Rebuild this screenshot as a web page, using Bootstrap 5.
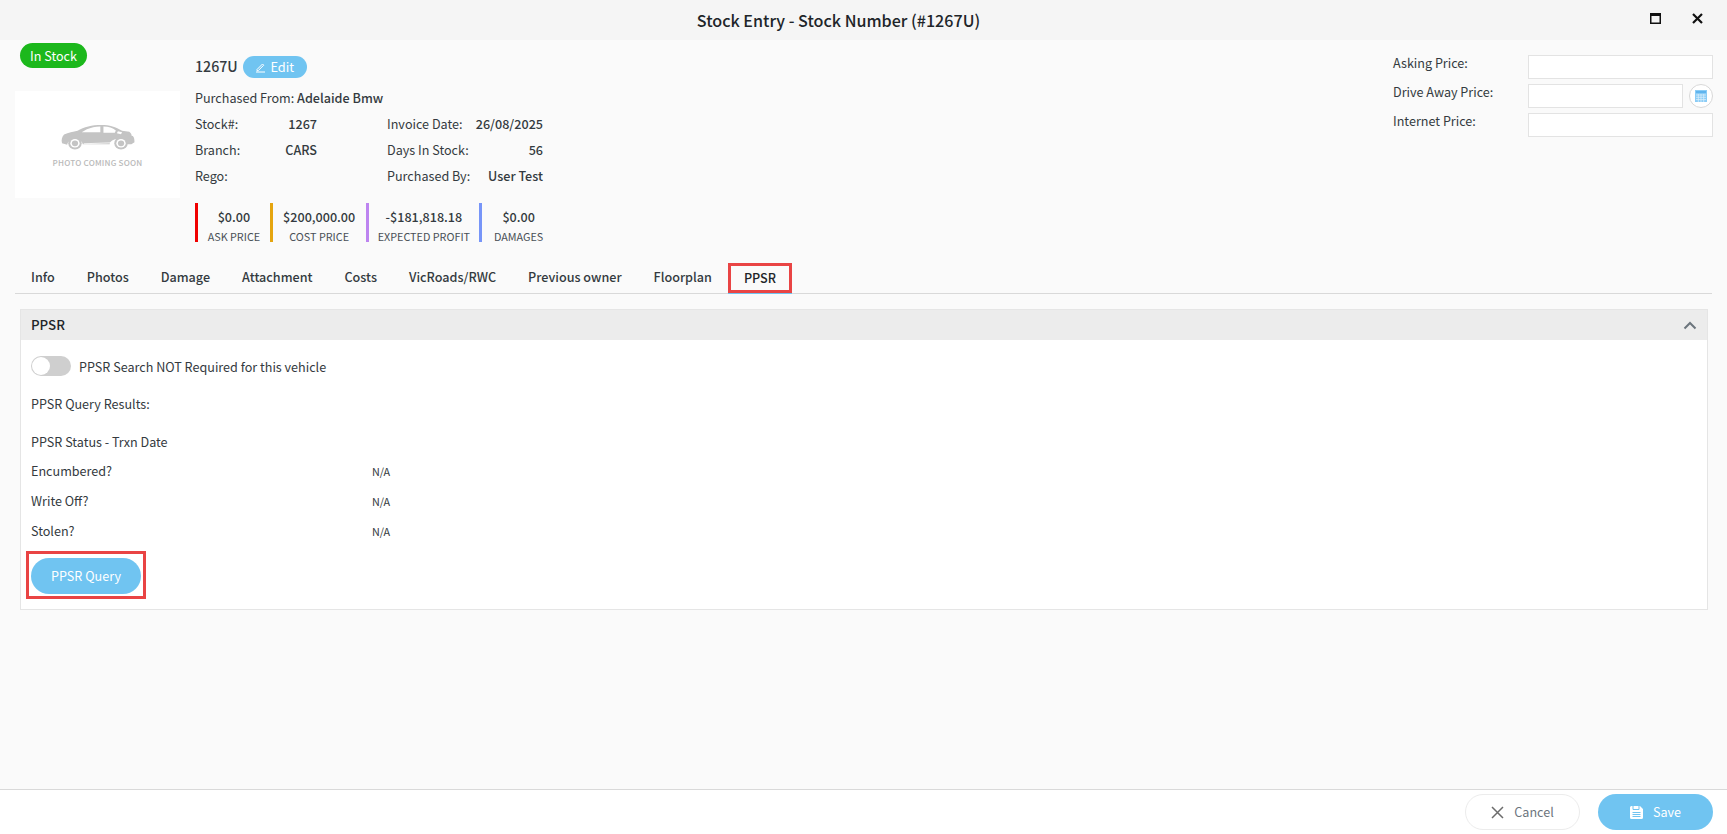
<!DOCTYPE html>
<html lang="en">
<head>
<meta charset="utf-8">
<title>Stock Entry</title>
<link href="https://cdn.jsdelivr.net/npm/bootstrap@5.3.0/dist/css/bootstrap.min.css" rel="stylesheet">
<style>
html,body{height:100%;}
body{font-family:"Noto Sans CJK SC","Noto Sans",sans-serif;font-size:12.6px;line-height:20px;color:#343a40;background:#fafafa;overflow:hidden;}
.shell{height:834px;}
.topbar{height:40px;background:#f5f5f5;position:relative;padding-right:50px;}
.topbar-title{font-size:16.1px;font-weight:500;color:#212529;}
.win-btns{position:absolute;right:24px;top:13px;gap:31px;}
.hero{height:224px;padding-top:3px;}
.left-col{width:195px;padding-left:15px;flex:none;}
.pill-stock{width:67px;height:25px;margin-left:5px;background:#1cb81c;color:#fff;border-radius:13px;font-size:12.6px;line-height:26px;text-align:center;}
.photo{width:165px;height:107px;background:#fff;margin-top:23px;padding-top:34px;}
.car-art{display:block;margin:0 auto;}
.photo-text{font-size:8.1px;line-height:12px;color:#b9b9b9;font-weight:500;letter-spacing:.2px;margin-top:7px;}
.mid-col{width:360px;flex:none;padding-top:13px;}
.stock-code{font-size:14.2px;font-weight:500;color:#343a40;margin-top:-2px;}
.edit-pill{width:64px;height:22px;background:#70c4f1;color:#fff;border:0;border-radius:11px;font-size:12.8px;line-height:22px;padding:0;margin-left:5px;}
.buy-row{margin-top:7px;height:26px;line-height:26px;}
.strong-val{font-weight:500;font-size:12.6px;}
.fact-grid{display:grid;grid-template-columns:122px 70px 156px;width:348px;}
.fact-grid>div{height:26px;line-height:26px;}
.stats{margin-top:14px;height:39px;}
.stat{border-left:3px solid #000;text-align:center;height:39px;}
.stat-num{font-size:12.6px;line-height:18px;font-weight:500;margin-top:5px;}
.stat-cap{font-size:10.8px;line-height:18px;color:#495057;margin-top:1px;}
.s1{border-color:#f00000;width:75px;}
.s2{border-color:#e5a50f;width:96px;}
.s3{border-color:#bd84f0;width:114px;}
.s4{border-color:#7795f8;width:76px;}
.price-col{width:334px;padding-right:14px;padding-top:12px;flex:none;}
.price-row{height:24px;margin-bottom:5px;}
.price-label{width:135px;line-height:20px;margin-top:-2px;}
.price-input{height:24px;min-width:0;background:#fff;border:1px solid #e3e3e3;border-radius:0;padding:0 6px;}
.calc-btn{width:24px;height:24px;margin-left:6px;border:1px solid #d8d8d8;border-radius:50%;background:#fff;flex:none;padding:0;}
.tabs-strip{margin:0 15px;height:30px;border-bottom:1px solid #d9d9d9;}
.tab-link{padding:0 16px;height:29px;line-height:26px;font-weight:500;color:#343a40;font-size:12.6px;text-decoration:none;}
.tab-on{height:30px;margin-top:-1px;border:3px solid #e94444;padding:0 13px;line-height:24px;box-shadow:0 1px 0 #70c4f1;color:#212529;}
.panel-box{margin:15px 19px 0 20px;height:301px;background:#fff;border:1px solid #e5e5e5;}
.panel-head{height:30px;background:#ececec;padding:0 10px;font-size:13.3px;font-weight:500;color:#212529;}
.panel-body-inner{padding:16px 10px 0 10px;color:#343a40;}
.switch-track{width:40px;height:20px;border-radius:10px;background:#cfcfcf;position:relative;flex:none;}
.switch-knob{position:absolute;left:1px;top:1px;width:18px;height:18px;border-radius:50%;background:#fff;}
.line-a{height:20px;line-height:20px;}
.line-lift{line-height:22px;}
.toggle-text{padding-top:2px;}
.gap-results{margin-top:18px;}
.gap-status{margin-top:17px;}
.na-val{position:absolute;left:341px;font-size:10.8px;}
.line-b{position:relative;height:20px;margin-bottom:10px;}
.line-first{margin-top:10px;}
.query-frame{width:120px;height:48px;margin-left:-5px;border:3px solid #e94444;padding:4px 2px;margin-top:10px;}
.query-btn{width:110px;height:36px;border:0;padding:0;border-radius:18px;background:#70c4f1;color:#fff;font-size:12.6px;}
.foot{height:45px;background:#fff;border-top:1px solid #d9d9d9;padding:4px 14px 0 0;gap:18px;}
.foot-btn{width:115px;height:36px;padding:0;border-radius:18px;font-size:12.6px;gap:10px;}
.foot-cancel{background:#fff;border:1px solid #ececec;color:#6c757d;}
.foot-save{background:#70c4f1;border:0;color:#fff;}
</style>
</head>
<body>
<div class="shell d-flex flex-column">
  <div class="topbar d-flex align-items-center justify-content-center">
    <span class="topbar-title">Stock Entry - Stock Number (#1267U)</span>
    <div class="win-btns d-flex align-items-center">
      <svg width="11" height="11" viewBox="0 0 11 11"><rect x=".75" y=".75" width="9.5" height="9.5" fill="none" stroke="#111" stroke-width="1.5"/><rect x="0" y="0" width="11" height="3" fill="#111"/></svg>
      <svg width="11" height="11" viewBox="0 0 11 11"><path d="M1 1l9 9M10 1l-9 9" stroke="#111" stroke-width="2.2"/></svg>
    </div>
  </div>

  <div class="hero d-flex">
    <div class="left-col">
      <div class="pill-stock">In Stock</div>
      <div class="photo text-center">
        <svg class="car-art" width="74" height="25" viewBox="0 1 71.500 26" preserveAspectRatio="none"><path fill="#c4c4c4" d="M1 20c-1-3 0-7 2-9 4-2 9-3 13-4 6-4 14-6 23-6 8 0 14 2 20 6l7 1 1 1 2 3c2 2 2 5 2 7l-3 2h-7c-1-7-13-7-14 0H21C20 14 7 14 6 21.500z"/><path fill="#fff" d="M25 5.500c4-2 8-2.800 13-3v6H20zM41 2.600c5 .2 9 1.400 12 4l-1 2.400H41zM55 7.500l4 1-1 2-4-1zM69 7l2 6-3-1z"/><circle cx="13.500" cy="20" r="6.500" fill="#c4c4c4"/><circle cx="13.500" cy="20" r="4.500" fill="#fff"/><circle cx="13.500" cy="20" r="3" fill="#c4c4c4"/><circle cx="58" cy="20" r="6.500" fill="#c4c4c4"/><circle cx="58" cy="20" r="4.500" fill="#fff"/><circle cx="58" cy="20" r="3" fill="#c4c4c4"/><path d="M22 20.500l27-1" stroke="#fff" stroke-width=".8"/></svg>
        <div class="photo-text">PHOTO COMING SOON</div>
      </div>
    </div>

    <div class="mid-col">
      <div class="d-flex align-items-center">
        <span class="stock-code">1267U</span>
        <button type="button" class="edit-pill d-inline-flex align-items-center justify-content-center gap-1">
          <svg width="11" height="11" viewBox="0 0 11 11"><path d="M2 7.500L7.500 2l1.200 1.200L3.200 8.700H2zM1 10h9" fill="none" stroke="#fff" stroke-width="1"/></svg>Edit
        </button>
      </div>
      <div class="buy-row">Purchased From: <span class="strong-val">Adelaide Bmw</span></div>
      <div class="fact-grid">
        <div class="d-flex justify-content-between"><span>Stock#:</span><span class="strong-val">1267</span></div>
        <div></div>
        <div class="d-flex justify-content-between"><span>Invoice Date:</span><span class="strong-val">26/08/2025</span></div>
        <div class="d-flex justify-content-between"><span>Branch:</span><span class="strong-val">CARS</span></div>
        <div></div>
        <div class="d-flex justify-content-between"><span>Days In Stock:</span><span class="strong-val">56</span></div>
        <div>Rego:</div>
        <div></div>
        <div class="d-flex justify-content-between"><span>Purchased By:</span><span class="strong-val">User Test</span></div>
      </div>
      <div class="stats d-flex">
        <div class="stat s1"><div class="stat-num">$0.00</div><div class="stat-cap">ASK PRICE</div></div>
        <div class="stat s2"><div class="stat-num">$200,000.00</div><div class="stat-cap">COST PRICE</div></div>
        <div class="stat s3"><div class="stat-num">-$181,818.18</div><div class="stat-cap">EXPECTED PROFIT</div></div>
        <div class="stat s4"><div class="stat-num">$0.00</div><div class="stat-cap">DAMAGES</div></div>
      </div>
    </div>

    <div class="flex-grow-1"></div>

    <div class="price-col">
      <div class="price-row d-flex"><div class="price-label">Asking Price:</div><input class="price-input flex-grow-1" type="text" aria-label="Asking Price"></div>
      <div class="price-row d-flex"><div class="price-label">Drive Away Price:</div><input class="price-input flex-grow-1" type="text" aria-label="Drive Away Price">
        <button type="button" class="calc-btn d-flex align-items-center justify-content-center" aria-label="Calculator"><svg width="12" height="12" viewBox="0 0 12 12"><rect width="12" height="12" fill="#8accf6"/><rect x="1" y="1" width="10" height="2" fill="#5fb4ee"/><path d="M1 5h10M1 7.300h10M1 9.600h10M3.300 4v8M6 4v8M8.700 4v8" stroke="#d8eefb" stroke-width=".8"/></svg></button>
      </div>
      <div class="price-row d-flex"><div class="price-label">Internet Price:</div><input class="price-input flex-grow-1" type="text" aria-label="Internet Price"></div>
    </div>
  </div>

  <nav class="tabs-strip d-flex">
    <a class="tab-link" href="#">Info</a>
    <a class="tab-link" href="#">Photos</a>
    <a class="tab-link" href="#">Damage</a>
    <a class="tab-link" href="#">Attachment</a>
    <a class="tab-link" href="#">Costs</a>
    <a class="tab-link" href="#">VicRoads/RWC</a>
    <a class="tab-link" href="#">Previous owner</a>
    <a class="tab-link" href="#">Floorplan</a>
    <a class="tab-link tab-on" href="#">PPSR</a>
  </nav>

  <div class="panel-box">
    <div class="panel-head d-flex align-items-center justify-content-between">
      <span>PPSR</span>
      <svg width="14" height="9" viewBox="0 0 14 9"><path d="M1.500 7.500L7 2l5.500 5.500" fill="none" stroke="#6c757d" stroke-width="2"/></svg>
    </div>
    <div class="panel-body-inner">
      <div class="d-flex align-items-center gap-2 line-a"><div class="switch-track"><div class="switch-knob"></div></div><span class="toggle-text">PPSR Search NOT Required for this vehicle</span></div>
      <div class="line-a gap-results">PPSR Query Results:</div>
      <div class="line-a gap-status line-lift">PPSR Status - Trxn Date</div>
      <div class="line-b line-first">Encumbered?<span class="na-val">N/A</span></div>
      <div class="line-b">Write Off?<span class="na-val">N/A</span></div>
      <div class="line-b">Stolen?<span class="na-val">N/A</span></div>
      <div class="query-frame"><button type="button" class="query-btn">PPSR Query</button></div>
    </div>
  </div>

  <div class="flex-grow-1"></div>

  <div class="foot d-flex justify-content-end">
    <button type="button" class="foot-btn foot-cancel d-flex align-items-center justify-content-center">
      <svg width="13" height="13" viewBox="0 0 13 13"><path d="M1 1l11 11M12 1L1 12" stroke="#6c6c6c" stroke-width="1.500"/></svg>Cancel
    </button>
    <button type="button" class="foot-btn foot-save d-flex align-items-center justify-content-center">
      <svg width="13" height="13" viewBox="0 0 13 13"><path fill="#fff" d="M0 1.500A1.500 1.500 0 0 1 1.500 0H10l3 3v8.500a1.500 1.500 0 0 1-1.500 1.500h-10A1.500 1.500 0 0 1 0 11.500z"/><path d="M3 0v3.500h6V0M2.500 6.500h8M2.500 8.500h8M2.500 10.500h8" fill="none" stroke="#70c4f1" stroke-width="1"/></svg>Save
    </button>
  </div>
</div>
<script src="https://cdn.jsdelivr.net/npm/bootstrap@5.3.0/dist/js/bootstrap.bundle.min.js"></script>
</body>
</html>
